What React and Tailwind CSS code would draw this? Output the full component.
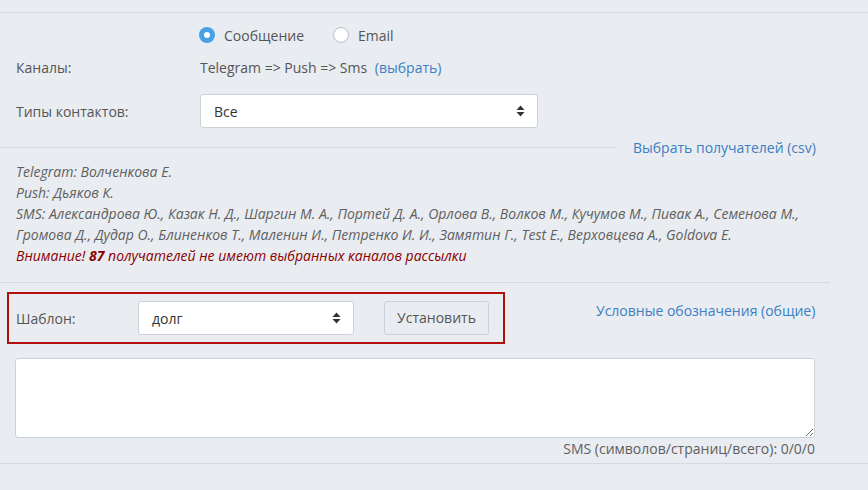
import { useState } from 'react';

const RECIPIENTS_SMS =
    'Александрова Ю., Казак Н. Д., Шаргин М. А., Портей Д. А., Орлова В., Волков М., Кучумов М., Пивак А., Семенова М., Громова Д., Дудар О., Блиненков Т., Маленин И., Петренко И. И., Замятин Г., Test E., Верховцева А., Goldova E.';

/**
 * Стрелки выпадающего списка
 */
function SelectArrows() {
    return (
        <svg width="9" height="12" viewBox="0 0 9 12" className="absolute right-[12px] top-1/2 -translate-y-1/2">
            <path d="M4.5 0.5 L8.5 5 L0.5 5 Z" fill="#333" />
            <path d="M4.5 11.5 L8.5 7 L0.5 7 Z" fill="#333" />
        </svg>
    );
}

function FakeSelect({ value, className }) {
    return (
        <div className={`relative bg-white border border-[#ccd1d9] rounded-[3px] flex items-center pl-[13px] text-[14px] text-[#333] ${className}`}>
            {value}
            <SelectArrows />
        </div>
    );
}

function Radio({ checked, label, onClick }) {
    return (
        <button type="button" onClick={onClick} className="flex items-center gap-[9px] text-[14px] text-[#555]">
            {checked ? (
                <span className="w-[16px] h-[16px] rounded-full bg-[#46a2e4] flex items-center justify-center">
                    <span className="w-[6px] h-[6px] rounded-full bg-white" />
                </span>
            ) : (
                <span className="w-[16px] h-[16px] rounded-full bg-white border border-[#b5bcc6]" />
            )}
            {label}
        </button>
    );
}

export default function App() {
    const [ mode, setMode ] = useState('message');

    return (
        <div
            className="w-[868px] h-[490px] bg-[#e9ecf1] overflow-hidden text-[#555]"
            style={{ fontFamily: '"Open Sans", "Liberation Sans", sans-serif' }}
        >
            <div className="h-[12px]" />
            <div className="border-t border-[#d6dae0]" />

            {/* Тип рассылки */}
            <div className="mt-[11px] h-[22px] pl-[199px] flex items-center gap-[29px]">
                <Radio checked={mode === 'message'} label="Сообщение" onClick={() => setMode('message')} />
                <Radio checked={mode === 'email'} label="Email" onClick={() => setMode('email')} />
            </div>

            {/* Каналы */}
            <div className="mt-[11px] h-[20px] flex items-center text-[14px]">
                <div className="w-[200px] pl-[16px]">Каналы:</div>
                <div>
                    Telegram =&gt; Push =&gt; Sms{' '}
                    <a className="ml-[4px] text-[#3b7fc4]">(выбрать)</a>
                </div>
            </div>

            {/* Типы контактов */}
            <div className="mt-[17px] flex items-center text-[14px]">
                <div className="w-[200px] pl-[16px]">Типы контактов:</div>
                <FakeSelect value="Все" className="w-[338px] h-[34px]" />
            </div>

            <div className="mt-[9px] h-[20px] flex items-center">
                <div className="w-[617px] border-t border-[#d6dae0]" />
                <a className="ml-[16px] text-[14px] text-[#3b7fc4]">Выбрать получателей (csv)</a>
            </div>

            {/* Получатели */}
            <div className="mt-[4px] pl-[16px] w-[830px] text-[14px] leading-[21px] italic text-[#5f5f5f]">
                <div>Telegram: Волченкова Е.</div>
                <div>Push: Дьяков К.</div>
                <div>SMS: {RECIPIENTS_SMS}</div>
                <div className="text-[#8b0000]">
                    Внимание! <strong>87</strong> получателей не имеют выбранных каналов рассылки
                </div>
            </div>

            <div className="mt-[16px] w-[830px] border-t border-[#d6dae0]" />

            {/* Шаблон */}
            <div className="mt-[9px] flex items-start">
                <div className="ml-[7px] w-[498px] h-[52px] border-2 border-[#b20f0f] flex items-center text-[14px]">
                    <div className="w-[129px] pl-[7px]">Шаблон:</div>
                    <FakeSelect value="долг" className="w-[216px] h-[34px]" />
                    <button
                        type="button"
                        className="ml-[30px] w-[105px] h-[34px] -mt-[1px] border border-[#ccd1d9] rounded-[3px] bg-[#e9ecf1] text-[14px] text-[#555]"
                    >
                        Установить
                    </button>
                </div>
                <a className="ml-[91px] mt-[8px] text-[14px] text-[#3b7fc4]">Условные обозначения (общие)</a>
            </div>

            {/* Текст сообщения */}
            <div className="mt-[14px] pl-[15px] w-[815px]">
                <textarea className="block w-full h-[80px] bg-white border border-[#ccd1d9] rounded-[3px] outline-none" />
                <div className="mt-[1px] text-right text-[14px] leading-[20px] text-[#5f5f5f]">
                    SMS (символов/страниц/всего): 0/0/0
                </div>
            </div>

            <div className="mt-[4px] border-t border-[#d6dae0]" />
        </div>
    );
}
